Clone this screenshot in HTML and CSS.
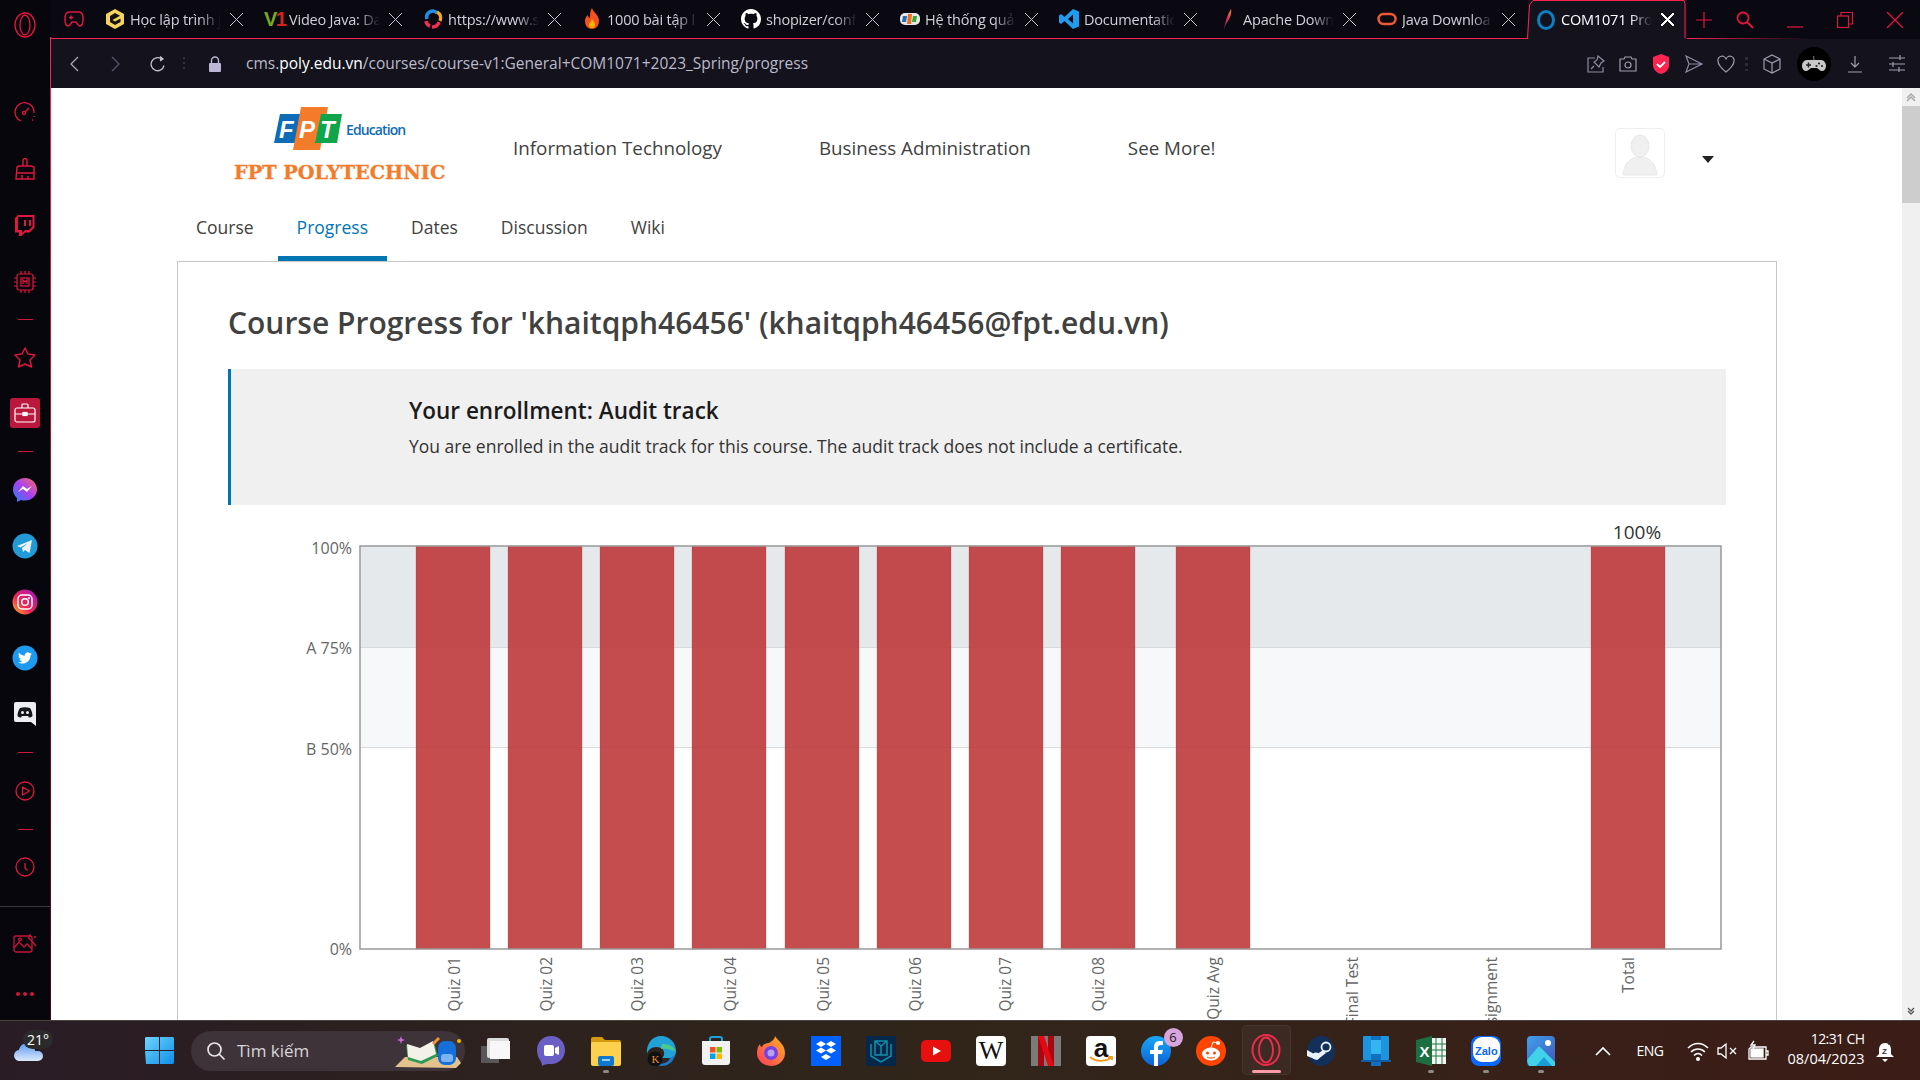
FILE: index.html
```html
<!DOCTYPE html>
<html lang="en">
  <head>
    <meta charset="UTF-8" />
    <meta name="viewport" content="width=device-width, initial-scale=1.0" />
    <title>COM1071 Progress</title>
    <link rel="stylesheet" href="styles.css">
  </head>
  <body>
    <div class="browser">
      <!-- opera side bar -->
      <aside class="sidebar">
        <div class="side-logo">
          <svg width="22" height="26" viewBox="0 0 22 26" fill="none" stroke="#e0173f" stroke-width="1.3"><ellipse cx="11" cy="13" rx="10" ry="12"/><ellipse cx="11" cy="13" rx="5" ry="10"/></svg>
        </div>
        <div class="side-slot first">
          <svg width="22" height="22" viewBox="0 0 22 22" fill="none" stroke="#e0173f" stroke-width="1.3"><path d="M7 20A9.5 9.5 0 1 1 20 12"/><circle cx="10" cy="12" r="1.5"/><path d="M11 11l4-4M20 15v1M18 19h1"/></svg>
        </div>
        <div class="side-slot nudge">
          <svg width="20" height="22" viewBox="0 0 20 22" fill="none" stroke="#e0173f" stroke-width="1.4"><path d="M8 8V2.5a2 2 0 0 1 4 0V8M4 8h12l3 1v12H1l1-12zM1 15h18M7 21v-4M13 21v-3"/></svg>
        </div>
        <div class="side-slot nudge">
          <svg width="20" height="22" viewBox="0 0 20 22" fill="#e0173f"><path d="M3 0h16.500v12.500l-5 5H10l-3.500 3.500H4v-3.500H0V3zM3 2v13h4v3l3-3h4l3.500-3.500V2zM9 5h2v6H9zM14 5h2v6h-2z"/></svg>
        </div>
        <div class="side-slot">
          <svg width="24" height="24" viewBox="0 0 24 24" fill="none" stroke="#e0173f" stroke-width="1.200"><rect x="4" y="4" width="16" height="16" rx="2"/><rect x="8" y="8" width="8" height="8"/><path d="M8 1v3M12 1v3M16 1v3M8 20v3M12 20v3M16 20v3M1 8h3M1 12h3M1 16h3M20 8h3M20 12h3M20 16h3M10 14v-4l2 2 2-2v4"/></svg>
        </div>
        <div class="side-divider short"></div>
        <div class="side-slot">
          <svg width="22" height="21" viewBox="0 0 22 21" fill="none" stroke="#e0173f" stroke-width="1.4" stroke-linejoin="round"><path d="M11 1l3 6 7 1-5 5 1.500 7-6.500-3-6.500 3L6 13 1 8l7-1z"/></svg>
        </div>
        <div class="side-slot">
          <div class="side-active">
            <svg width="22" height="20" viewBox="0 0 22 20" fill="none" stroke="#fff" stroke-width="1.200"><rect x="1" y="5" width="20" height="14" rx="2"/><path d="M8 5V2a1 1 0 0 1 1-1h4a1 1 0 0 1 1 1v3M1 11h8M13 11h8"/><rect x="9" y="9.500" width="4" height="3" fill="#fff"/></svg>
          </div>
        </div>
        <div class="side-divider tall"></div>
        <div class="side-slot">
          <svg width="26" height="26" viewBox="0 0 26 26"><defs><linearGradient id="msgr" x1="0" y1="1" x2="1" y2="0"><stop offset="0" stop-color="#1e88f5"/><stop offset=".5" stop-color="#a83ff0"/><stop offset="1" stop-color="#ff6a6a"/></linearGradient></defs><path d="M13 1C6 1 1 6 1 12.500c0 3.500 1.500 6.500 4 8.500v4l4-2c1.300.4 2.600.5 4 .5 7 0 12-5 12-11S20 1 13 1z" fill="url(#msgr)"/><path d="M6 15l5-6 4 3 5-3-5 6-4-3z" fill="#fff"/></svg>
        </div>
        <div class="side-slot">
          <svg width="26" height="26" viewBox="0 0 26 26"><circle cx="13" cy="13" r="12.500" fill="#229ad6"/><path d="M5 13l15-6-2.500 13-4.500-3-2 2-1-4 6-5-7.500 4.500z" fill="#e8f4fb"/></svg>
        </div>
        <div class="side-slot">
          <svg width="26" height="26" viewBox="0 0 26 26" fill="none"><defs><linearGradient id="insta" x1="0" y1="1" x2="1" y2="0"><stop offset="0" stop-color="#fdc830"/><stop offset=".4" stop-color="#f2264f"/><stop offset="1" stop-color="#9b16c9"/></linearGradient></defs><circle cx="13" cy="13" r="12.500" fill="url(#insta)"/><rect x="6" y="6" width="14" height="14" rx="4" stroke="#fff" stroke-width="1.500"/><circle cx="13" cy="13" r="3.300" stroke="#fff" stroke-width="1.500"/><circle cx="17" cy="9" r="1" fill="#fff"/></svg>
        </div>
        <div class="side-slot">
          <svg width="26" height="26" viewBox="0 0 26 26"><circle cx="13" cy="13" r="12.500" fill="#1d9bf0"/><g transform="translate(6 6) scale(.58)"><path fill="#fff" d="M23.953 4.570a10 10 0 01-2.825.775 4.958 4.958 0 002.163-2.723c-.951.555-2.005.959-3.127 1.184a4.920 4.920 0 00-8.384 4.482C7.690 8.095 4.067 6.130 1.640 3.162a4.822 4.822 0 00-.666 2.475c0 1.710.870 3.213 2.188 4.096a4.904 4.904 0 01-2.228-.616v.060a4.923 4.923 0 003.946 4.827 4.996 4.996 0 01-2.212.085 4.936 4.936 0 004.604 3.417 9.867 9.867 0 01-6.102 2.105c-.390 0-.779-.023-1.170-.067a13.995 13.995 0 007.557 2.209c9.053 0 13.998-7.496 13.998-13.985 0-.210 0-.420-.015-.630A9.935 9.935 0 0024 4.590z"/></g></svg>
        </div>
        <div class="side-slot">
          <svg width="24" height="26" viewBox="0 0 24 26"><path d="M3 1h18a2 2 0 0 1 2 2v22l-5-4H3a2 2 0 0 1-2-2V3a2 2 0 0 1 2-2z" fill="#eceef1"/><path d="M7 7c3-1 7-1 10 0 1.500 2 2.500 5 2.500 8-1 1-2.500 1.500-3.500 1.500l-1-1.500H9l-1 1.500c-1 0-2.500-.5-3.500-1.500C4.500 12 5.500 9 7 7z" fill="#15151c"/><circle cx="9.500" cy="11.500" r="1.500" fill="#eceef1"/><circle cx="14.500" cy="11.500" r="1.500" fill="#eceef1"/></svg>
        </div>
        <div class="side-divider tall"></div>
        <div class="side-slot">
          <svg width="20" height="20" viewBox="0 0 20 20" fill="none" stroke="#e0173f" stroke-width="1.300"><circle cx="10" cy="10" r="9"/><path d="M7.500 6l7 4-7 4z" stroke-linejoin="round"/></svg>
        </div>
        <div class="side-divider"></div>
        <div class="side-slot">
          <svg width="20" height="20" viewBox="0 0 20 20" fill="none" stroke="#e0173f" stroke-width="1.300"><circle cx="10" cy="10" r="9"/><path d="M10 6v5l2.500 2.500"/></svg>
        </div>
        <div class="side-rule"></div>
        <div class="side-slot gallery">
          <svg width="24" height="20" viewBox="0 0 24 20" fill="none" stroke="#c8163a" stroke-width="1.300"><rect x="1" y="3" width="18" height="16" rx="2"/><path d="M1 15l5-6 5 5 3-3 5 5"/><circle cx="7" cy="6.500" r="1.300"/><path d="M15 4l8 9M17 1v3M21 4h2"/></svg>
        </div>
        <div class="side-dots"><span></span><span></span><span></span></div>
      </aside>

      <!-- tabs -->
      <header class="tabstrip">
        <div class="tab-game">
          <svg width="20" height="16" viewBox="0 0 20 16" fill="none" stroke="#e0173f" stroke-width="1.500"><path d="M5 1h10c3 0 4 3 4 7 0 3-.5 7-3 7-2 0-3-3-4-4H8c-1 1-2 4-4 4-2.500 0-3-4-3-7 0-4 1-7 4-7z"/><path d="M5 6.500h4M7 4.500v4M13 5h.1M15 7.500h.1"/></svg>
        </div>
        <div class="tabs">
          <div class="tab">
            <svg class="tab-icon" width="20" height="20" viewBox="0 0 20 20"><path d="M10 0l9 5v10l-9 5-9-5V5z" fill="#f4d35e"/><path d="M10 4l5 2.800-7.500 4.200 2.500 1.500 5.500-3V13l-5.500 3L5 13V7z" fill="#15130c"/></svg>
            <span class="tab-title">Học lập trình j</span><span class="tab-close"></span>
          </div>
          <div class="tab">
            <span class="tab-icon v1"><b class="v1-v">V</b><b class="v1-1">1</b></span>
            <span class="tab-title">Video Java: Da</span><span class="tab-close"></span>
          </div>
          <div class="tab">
            <svg class="tab-icon" width="20" height="20" viewBox="0 0 20 20" fill="none" stroke-width="3.500"><path d="M4 10a6 6 0 0 1 10-6" stroke="#1f8fe8"/><path d="M14 3a7 7 0 0 1 3 9" stroke="#f5a623"/><path d="M16 13a7 7 0 0 1-7 5" stroke="#f0304f"/><path d="M7 17a6 6 0 0 1-4-5" stroke="#f0304f"/></svg>
            <span class="tab-title">https://www.s</span><span class="tab-close"></span>
          </div>
          <div class="tab">
            <svg class="tab-icon" width="20" height="22" viewBox="0 0 20 22"><path d="M10 0c1 4 7 7 7 13 0 5-3 8-7 8s-7-3-7-8c0-3 1.500-5 3-6 0 2 1 3 2 3 0-4 0-7 2-10z" fill="#f4511e"/><path d="M10 11c1 2 3 3 3 6a3 3 0 0 1-6 0c0-2 2-3 3-6z" fill="#ffb300"/></svg>
            <span class="tab-title">1000 bài tập l</span><span class="tab-close"></span>
          </div>
          <div class="tab">
            <svg class="tab-icon" width="20" height="20" viewBox="0 0 16 16"><path fill="#fff" d="M8 0C3.580 0 0 3.580 0 8c0 3.540 2.290 6.530 5.470 7.590.400.070.550-.170.550-.380 0-.190-.010-.820-.010-1.490-2.010.370-2.530-.490-2.690-.940-.090-.230-.480-.940-.820-1.130-.280-.150-.680-.520-.010-.530.630-.010 1.080.580 1.230.820.720 1.210 1.870.870 2.330.660.070-.520.280-.870.510-1.070-1.780-.200-3.640-.890-3.640-3.950 0-.870.310-1.590.820-2.150-.080-.200-.360-1.020.080-2.120 0 0 .670-.210 2.200.820.640-.180 1.320-.270 2-.270.680 0 1.360.090 2 .270 1.530-1.040 2.200-.820 2.200-.820.440 1.100.160 1.920.080 2.120.510.560.820 1.270.820 2.150 0 3.070-1.870 3.750-3.650 3.950.290.250.540.730.540 1.480 0 1.070-.010 1.930-.010 2.200 0 .210.150.460.550.380A8.013 8.013 0 0016 8c0-4.420-3.580-8-8-8z"/></svg>
            <span class="tab-title">shopizer/conf</span><span class="tab-close"></span>
          </div>
          <div class="tab">
            <svg class="tab-icon" width="20" height="14" viewBox="0 0 20 14"><rect y="1" width="20" height="12" rx="5" fill="#e8e8e8"/><path d="M3 4h4l-1 6H2z" fill="#1b6fbd"/><path d="M8 2h4l-1 10H7z" fill="#f26f21"/><path d="M13 4h4l-1 6h-4z" fill="#3aaa35"/></svg>
            <span class="tab-title">Hệ thống quả</span><span class="tab-close"></span>
          </div>
          <div class="tab">
            <svg class="tab-icon" width="20" height="20" viewBox="0 0 20 20"><path d="M14 0l6 2.500v15L14 20 5.500 12 2 15l-2-1.500V6.500L2 5l3.500 3zM14 5.500L9 10l5 4.500z" fill="#1f9cf0"/></svg>
            <span class="tab-title">Documentatio</span><span class="tab-close"></span>
          </div>
          <div class="tab">
            <svg class="tab-icon" width="20" height="22" viewBox="0 0 20 22"><defs><linearGradient id="feather" x1="0" y1="1" x2="1" y2="0"><stop offset="0" stop-color="#5b2a86"/><stop offset=".5" stop-color="#d32f4f"/><stop offset="1" stop-color="#f28c28"/></linearGradient></defs><path d="M6 21c1-7 3-14 7-20 1 4-1 10-5 15z" fill="url(#feather)"/></svg>
            <span class="tab-title">Apache Down</span><span class="tab-close"></span>
          </div>
          <div class="tab">
            <svg class="tab-icon" width="20" height="14" viewBox="0 0 20 14"><rect x="1.500" y="2" width="17" height="10" rx="5" fill="none" stroke="#ee5a35" stroke-width="2.500"/></svg>
            <span class="tab-title">Java Downloa</span><span class="tab-close"></span>
          </div>
          <div class="tab active">
            <svg class="tab-frame" width="159" height="39" viewBox="0 0 159 39" fill="none" stroke="#ff2350"><path d="M0 38.500h.5l2-33.500L6 .5h151l1 3V38.500"/></svg>
            <svg class="tab-icon" width="20" height="20" viewBox="0 0 20 20"><ellipse cx="10" cy="10" rx="7.500" ry="8.500" fill="none" stroke="#0d7fc0" stroke-width="3"/></svg>
            <span class="tab-title">COM1071 Pro</span><span class="tab-close"></span>
          </div>
        </div>
        <div class="win-btn plus"><svg width="16" height="16" viewBox="0 0 16 16" stroke="#e0173f" stroke-width="1.200"><path d="M8 0v16M0 8h16"/></svg></div>
        <div class="win-btn find"><svg width="18" height="18" viewBox="0 0 18 18" fill="none" stroke="#e0173f" stroke-width="1.800"><circle cx="7" cy="7" r="5.500"/><path d="M11 11l6 6"/></svg></div>
        <div class="win-btn min"><svg width="16" height="16" viewBox="0 0 16 16" stroke="#e0173f" stroke-width="1.200"><path d="M0 15h16"/></svg></div>
        <div class="win-btn restore"><svg width="16" height="16" viewBox="0 0 16 16" fill="none" stroke="#e0173f" stroke-width="1.200"><rect x=".5" y="4" width="11" height="11.500"/><path d="M4 4V.5h11.500V12H12"/></svg></div>
        <div class="win-btn shut"><svg width="16" height="16" viewBox="0 0 16 16" stroke="#e0173f" stroke-width="1.300"><path d="M0 0l16 16M16 0L0 16"/></svg></div>
      </header>

      <!-- address bar -->
      <div class="addressbar">
        <svg class="addr-back" width="16" height="16" viewBox="0 0 16 16" fill="none" stroke="#a9a6b8" stroke-width="1.300"><path d="M11 1L4 8l7 7"/></svg>
        <svg class="addr-forward" width="16" height="16" viewBox="0 0 16 16" fill="none" stroke="#55536a" stroke-width="1.300"><path d="M5 1l7 7-7 7"/></svg>
        <svg class="addr-reload" width="16" height="16" viewBox="0 0 16 16" fill="none" stroke="#c2c0cc" stroke-width="1.300"><path d="M14 9.500A6.500 6.500 0 1 1 11.500 3"/><path d="M10 .5l3 2.500-3 2" fill="#c2c0cc"/></svg>
        <span class="addr-dots"></span>
        <svg class="addr-lock" width="14" height="16" viewBox="0 0 14 16"><rect x="1" y="7" width="12" height="9" rx="1" fill="#bdb6d6"/><path d="M3.500 7V4.500a3.500 3.500 0 0 1 7 0V7" fill="none" stroke="#bdb6d6" stroke-width="1.400"/></svg>
        <div class="url">cms.<b>poly.edu.vn</b>/courses/course-v1:General+COM1071+2023_Spring/progress</div>
        <div class="addr-tools">
          <svg class="tool" width="20" height="20" viewBox="0 0 20 20" fill="none" stroke="#8f8ca0" stroke-width="1.200"><path d="M9 4H2v14h15v-5"/><path d="M12 2l6 5-3 2-2 4-5-5 3-2zM8 12l-3 3"/></svg>
          <svg class="tool t2" width="20" height="20" viewBox="0 0 20 20" fill="none" stroke="#a09dae" stroke-width="1.200"><path d="M2 5h4l1-2h6l1 2h4v12H2z"/><circle cx="10" cy="11" r="3"/></svg>
          <svg class="tool t3" width="20" height="20" viewBox="0 0 20 20"><path d="M10 0l8 3v8c0 5-4 8-8 9-4-1-8-4-8-9V3z" fill="#ff2350"/><path d="M6 10l3 3 5-5" fill="none" stroke="#fff" stroke-width="1.800"/></svg>
          <svg class="tool t3" width="20" height="20" viewBox="0 0 20 20" fill="none" stroke="#8f8ca0" stroke-width="1.200"><path d="M2 2l16 8-16 8 3-8zM5 10h13"/></svg>
          <svg class="tool t2" width="20" height="20" viewBox="0 0 20 20" fill="none" stroke="#a09dae" stroke-width="1.200"><path d="M10 18C5 14 2 11 2 7a4 4 0 0 1 8-1.500A4 4 0 0 1 18 7c0 4-3 7-8 11z"/></svg>
          <span class="tool-dots"></span>
          <svg class="tool t4" width="20" height="20" viewBox="0 0 20 20" fill="none" stroke="#a09dae" stroke-width="1.200"><path d="M10 1l8 4v10l-8 4-8-4V5zM2 5l8 4 8-4M10 9v10"/></svg>
          <div class="tool-game">
            <svg width="26" height="18" viewBox="0 0 26 18"><path d="M6 5h14c3 0 5 3 5 6s-2 5-4 5-3-2-5-3h-6c-2 1-3 3-5 3s-4-2-4-5 2-6 5-6z" fill="#c9c9c9"/><path d="M5 10h5M7.500 7.500v5" stroke="#222" stroke-width="1.500"/><circle cx="18" cy="8.500" r="1.100" fill="#222"/><circle cx="21" cy="11" r="1.100" fill="#222"/><circle cx="15.500" cy="11" r="1.100" fill="#222"/><path d="M13 5c0-2-1-2 0-4" fill="none" stroke="#888"/></svg>
          </div>
          <svg class="tool t5" width="20" height="20" viewBox="0 0 20 20" fill="none" stroke="#a09dae" stroke-width="1.200"><path d="M10 2v11M6 9l4 4 4-4M3 18h14"/></svg>
          <svg class="tool t6" width="20" height="20" viewBox="0 0 20 20" fill="none" stroke="#a09dae" stroke-width="1.200"><path d="M2 4h16M2 10h16M2 16h16M13 1v5M6 8v5M12 13v5"/></svg>
        </div>
      </div>

      <!-- page -->
      <div class="viewport">
        <main class="page">
          <div class="site-head">
            <div class="logo">
              <div class="logo-top">
                <svg width="68" height="44" viewBox="0 0 68 44" class="logo-mark">
                  <path d="M6 7h26l-6 29H0z" fill="#0d6cb5"/>
                  <path d="M27 0h27l-8 43H19z" fill="#f47b2a"/>
                  <path d="M47 7h21l-5 29H41z" fill="#10a54a"/>
                  <text x="5" y="31" class="fpt-letter">F</text>
                  <text x="25" y="31" class="fpt-letter">P</text>
                  <text x="46" y="31" class="fpt-letter">T</text>
                </svg>
                <span class="logo-edu">Education</span>
              </div>
              <div class="logo-name">FPT POLYTECHNIC</div>
            </div>
            <nav class="main-nav">
              <a>Information Technology</a>
              <a>Business Administration</a>
              <a>See More!</a>
            </nav>
            <div class="avatar">
              <svg width="48" height="48" viewBox="0 0 48 48" fill="#f0f0f0" stroke="#e8e8e8"><ellipse cx="24" cy="17" rx="9" ry="11"/><path d="M7 46c1-12 8-18 17-18s16 6 17 18z"/></svg>
            </div>
            <span class="caret"></span>
          </div>

          <nav class="course-nav">
            <a>Course</a>
            <a class="current">Progress</a>
            <a>Dates</a>
            <a>Discussion</a>
            <a>Wiki</a>
          </nav>

          <section class="card">
            <h1 class="progress-title">Course Progress for 'khaitqph46456' (khaitqph46456@fpt.edu.vn)</h1>
            <div class="enrollment">
              <h2>Your enrollment: Audit track</h2>
              <p>You are enrolled in the audit track for this course. The audit track does not include a certificate.</p>
            </div>
            <svg class="chart" width="1498" height="520" viewBox="0 0 1498 520">
              <rect x="132" y="26" width="1361" height="102" fill="#e6e9ec"/>
              <rect x="132" y="128" width="1361" height="100" fill="#f7f8fa"/>
              <path d="M132 127.500h1361M132 227.500h1361" stroke="#d8dbde"/>
              <g class="bars">
                <rect x="188" y="26" width="74" height="403"/>
                <rect x="280" y="26" width="74" height="403"/>
                <rect x="372" y="26" width="74" height="403"/>
                <rect x="464" y="26" width="74" height="403"/>
                <rect x="557" y="26" width="74" height="403"/>
                <rect x="649" y="26" width="74" height="403"/>
                <rect x="741" y="26" width="74" height="403"/>
                <rect x="833" y="26" width="74" height="403"/>
                <rect x="948" y="26" width="74" height="403"/>
                <rect x="1363" y="26" width="74" height="403"/>
              </g>
              <rect x="132" y="26" width="1361" height="403" fill="none" stroke="#999" stroke-width="1.500"/>
              <g class="y-labels">
                <text x="124" y="34">100%</text>
                <text x="124" y="134">A 75%</text>
                <text x="124" y="235">B 50%</text>
                <text x="124" y="435">0%</text>
              </g>
              <text x="1409" y="19" class="bar-value">100%</text>
              <g class="x-labels">
                <text transform="translate(232 437) rotate(-90)">Quiz 01</text>
                <text transform="translate(324 437) rotate(-90)">Quiz 02</text>
                <text transform="translate(415 437) rotate(-90)">Quiz 03</text>
                <text transform="translate(508 437) rotate(-90)">Quiz 04</text>
                <text transform="translate(601 437) rotate(-90)">Quiz 05</text>
                <text transform="translate(693 437) rotate(-90)">Quiz 06</text>
                <text transform="translate(783 437) rotate(-90)">Quiz 07</text>
                <text transform="translate(876 437) rotate(-90)">Quiz 08</text>
                <text transform="translate(991 437) rotate(-90)">Quiz Avg</text>
                <text transform="translate(1130 437) rotate(-90)">Final Test</text>
                <text transform="translate(1269 437) rotate(-90)">Assignment</text>
                <text transform="translate(1406 437) rotate(-90)">Total</text>
              </g>
            </svg>
          </section>
        </main>
        <div class="scrollbar">
          <svg width="18" height="18" viewBox="0 0 18 18" fill="none" stroke="#a8a8a8" stroke-width="1.500"><path d="M5 10l4-4 4 4M5 13l4-4 4 4"/></svg>
          <div class="scroll-thumb"></div>
          <svg class="scroll-down" width="18" height="18" viewBox="0 0 18 18" fill="none" stroke="#555" stroke-width="1.300"><path d="M6 6l3 3 3-3M6 9l3 3 3-3"/></svg>
        </div>
      </div>
    </div>

    <!-- windows task bar -->
    <footer class="taskbar">
      <div class="weather">
        <svg width="32" height="22" viewBox="0 0 32 22"><defs><linearGradient id="cloud" x1="0" y1="0" x2="0" y2="1"><stop offset="0" stop-color="#5b9bf0"/><stop offset="1" stop-color="#dce8fa"/></linearGradient></defs><path d="M7 21a5.500 5.500 0 0 1-1-11c1-5 6-8 11-6 3 1 5 4 5 7h3a5 5 0 0 1 0 10z" fill="url(#cloud)"/></svg>
        <span class="temp">21°</span>
      </div>
      <svg class="start" width="30" height="30" viewBox="0 0 30 30"><defs><linearGradient id="win" x1="0" y1="0" x2="1" y2="1"><stop offset="0" stop-color="#6fd4fb"/><stop offset="1" stop-color="#0f8ee8"/></linearGradient></defs><path d="M1 1h13.500v13.500H0V2zM15.500 1H29l1 1v12.500H15.500zM0 15.500h14.500V29H1zM15.500 15.500H30V28l-1 1H15.500z" fill="url(#win)"/></svg>
      <div class="search">
        <svg width="20" height="20" viewBox="0 0 20 20" fill="none" stroke="#e8e6e8" stroke-width="1.700"><circle cx="8.500" cy="8.500" r="6.500"/><path d="M13 13l5.500 5.500"/></svg>
        <span>Tìm kiếm</span>
        <svg class="search-art" width="66" height="34" viewBox="0 0 66 34"><path d="M0 32l10-10h52l4 6-5 5z" fill="#e3c28f"/><path d="M11 10l14 4 14-7 4 14-16 8-14-4z" fill="#2f9a58"/><path d="M12 9l13 4 13-7 3 13-15 7-13-4z" fill="#f4f1e8"/><path d="M37 8l6-6 2 2-6 6z" fill="#f2963a"/><path d="M6 1l1 3 3 1-3 1-1 3-1-3-3-1 3-1z" fill="#d466e6"/><rect x="43" y="6" width="18" height="24" rx="7" fill="#1670dc"/><rect x="46" y="19" width="12" height="8" rx="3" fill="#7cb4f2"/><circle cx="64" cy="6" r="2" fill="#f5b400"/></svg>
      </div>
      <div class="apps">
        <div class="app"><svg width="30" height="26" viewBox="0 0 30 26"><rect x="0" y="8" width="18" height="17" fill="#58585a"/><rect x="6" y="0" width="22" height="20" rx="2" fill="#dcdcdc"/><rect x="9" y="3" width="20" height="18" fill="#f7f7f7"/></svg></div>
        <div class="app"><svg width="28" height="30" viewBox="0 0 28 30"><path d="M14 0c8 0 14 6 14 14s-6 14-14 14c-3 0-6 0-9 2 0-3-1-4-2-6C1 21 0 18 0 14 0 6 6 0 14 0z" fill="#6a5fc4"/><rect x="7" y="9" width="10" height="11" rx="2" fill="#fff"/><path d="M18 12l4-2v9l-4-2z" fill="#fff"/></svg></div>
        <div class="app dot"><svg width="30" height="30" viewBox="0 0 30 30"><path d="M0 3a2 2 0 0 1 2-2h9l3 3h14a2 2 0 0 1 2 2v4H0z" fill="#d79a0c"/><rect y="6" width="30" height="24" rx="2" fill="#fdd14e"/><rect x="7" y="20" width="16" height="10" rx="2" fill="#0f78cc"/><rect x="11" y="23" width="8" height="2" fill="#9bd0f5"/></svg></div>
        <div class="app"><svg width="30" height="30" viewBox="0 0 30 30"><path d="M15 0c9 0 15 7 15 15 0 5-3 7-6 7h-8c3-2 3-8-1-10C8 9 2 13 1 18 0 8 6 0 15 0z" fill="#22a0d8"/><path d="M30 14c0 9-6 16-14 16-3 0-5-1-7-2 5 0 13 0 15-6 3-1 6-3 6-8z" fill="#1b78c8"/><path d="M16 8c6 0 12 2 14 8-2-1-8-4-15-3z" fill="#4ec98a"/><circle cx="9" cy="23" r="7.500" fill="#111"/><text x="5.500" y="27" class="edge-k">K</text></svg></div>
        <div class="app"><svg width="30" height="30" viewBox="0 0 30 30" fill="none"><path d="M9 6V3a2 2 0 0 1 2-2h8a2 2 0 0 1 2 2v3" stroke="#1ba2e0" stroke-width="2"/><path d="M1 5h28v21a3 3 0 0 1-3 3H4a3 3 0 0 1-3-3z" fill="#f1f1f1"/><rect x="9" y="11" width="5.500" height="5.500" fill="#f25022"/><rect x="15.500" y="11" width="5.500" height="5.500" fill="#7fba00"/><rect x="9" y="17.500" width="5.500" height="5.500" fill="#00a4ef"/><rect x="15.500" y="17.500" width="5.500" height="5.500" fill="#ffb900"/></svg></div>
        <div class="app"><svg width="28" height="30" viewBox="0 0 28 30"><defs><linearGradient id="fox" x1="0" y1="1" x2="1" y2="0"><stop offset="0" stop-color="#ff3c5c"/><stop offset="1" stop-color="#ffb020"/></linearGradient></defs><path d="M18 0c2 4 10 8 10 17a14 13 0 0 1-28 0c0-4 1-7 3-9 0 2 1 3 2 3 1-3 4-4 7-4 3-2 6-4 6-7z" fill="url(#fox)"/><circle cx="14" cy="17" r="7" fill="#7542e5"/><circle cx="14" cy="17" r="3.500" fill="#b8a0f2"/></svg></div>
        <div class="app"><svg width="30" height="30" viewBox="0 0 30 30"><rect width="30" height="30" fill="#0061fe"/><path d="M10 5l5 3-5 3-5-3zM20 5l5 3-5 3-5-3zM10 11.500l5 3-5 3-5-3zM20 11.500l5 3-5 3-5-3zM15 18l5 3-5 3-5-3z" fill="#fff"/></svg></div>
        <div class="app"><svg width="30" height="30" viewBox="0 0 30 30" fill="none"><rect width="30" height="30" fill="#04274a"/><path d="M9 5h12v14l-6 0-6 0zM9 5l6 5 6-5M15 10v9M5 8v12l10 6 10-6V8" stroke="#0f90a8" stroke-width="1.500"/></svg></div>
        <div class="app"><svg width="30" height="22" viewBox="0 0 30 22"><rect width="30" height="22" rx="5" fill="#e80f0f"/><path d="M12 6.500l8 4.500-8 4.500z" fill="#fff"/></svg></div>
        <div class="app"><div class="wiki">W</div></div>
        <div class="app"><svg width="30" height="30" viewBox="0 0 30 30"><rect width="30" height="30" fill="#7b7b7b"/><rect x="7" width="6" height="30" fill="#a90812"/><rect x="17" width="6" height="30" fill="#a90812"/><path d="M7 0h6l10 30h-6z" fill="#e50914"/></svg></div>
        <div class="app"><div class="amazon">a<svg width="24" height="8" viewBox="0 0 24 8" fill="none" stroke="#f59a1e" stroke-width="1.800"><path d="M1 1c6 5 15 5 21 1M19 1h4v3"/></svg></div></div>
        <div class="app fb"><svg width="30" height="30" viewBox="0 0 30 30"><defs><linearGradient id="fbg" x1="0" y1="1" x2="0" y2="0"><stop offset="0" stop-color="#0b62d6"/><stop offset="1" stop-color="#19a8f6"/></linearGradient></defs><circle cx="15" cy="15" r="15" fill="url(#fbg)"/><path d="M13 30V18H9v-4h4v-3c0-4 2-6 6-6h3v4h-2c-2 0-3 1-3 2.500V14h5l-1 4h-4v12z" fill="#fff"/></svg><span class="fb-badge">6</span></div>
        <div class="app"><svg width="30" height="30" viewBox="0 0 30 30"><circle cx="15" cy="15" r="15" fill="#ff4500"/><ellipse cx="15" cy="18" rx="9" ry="6.500" fill="#fff"/><circle cx="11.500" cy="17" r="1.500" fill="#ff4500"/><circle cx="18.500" cy="17" r="1.500" fill="#ff4500"/><circle cx="22" cy="7" r="2" fill="#fff"/><path d="M15 12l2-6 5 1" fill="none" stroke="#fff"/><path d="M11 21c2 1.500 6 1.500 8 0" fill="none" stroke="#ff4500"/></svg></div>
        <div class="app running"><svg width="30" height="32" viewBox="0 0 30 32" fill="none" stroke="#ee2a4d" stroke-width="2"><ellipse cx="15" cy="16" rx="13.500" ry="15"/><ellipse cx="15" cy="16" rx="7" ry="12.500"/></svg></div>
        <div class="app"><svg width="30" height="30" viewBox="0 0 30 30"><ellipse cx="15" cy="15" rx="14" ry="15" fill="#12305a"/><circle cx="20" cy="11" r="4.500" fill="none" stroke="#eaf2f8" stroke-width="1.800"/><circle cx="10" cy="20" r="3.500" fill="#eaf2f8"/><path d="M1 14l9 5 7-5 3 3-9 7-10-4z" fill="#eaf2f8"/></svg></div>
        <div class="app"><svg width="30" height="30" viewBox="0 0 30 30"><rect x="2" width="26" height="24" rx="1" fill="#1c94e0"/><rect x="10" width="10" height="30" fill="#1070c0"/><rect x="10" y="4" width="10" height="14" fill="#34b4f0"/><rect y="24" width="30" height="2" fill="#0e5fa8"/></svg></div>
        <div class="app dot"><svg width="30" height="30" viewBox="0 0 30 30"><rect x="10" y="2" width="20" height="26" fill="#f2f5f2"/><path d="M14 2v26M20 2v26M26 2v26M10 8h20M10 14h20M10 20h20" stroke="#1f7a45" stroke-width="1"/><path d="M0 4l16-4v30L0 26z" fill="#1d6f42"/><text x="3.500" y="21" class="excel-x">X</text></svg></div>
        <div class="app dot"><svg width="30" height="30" viewBox="0 0 30 30"><path d="M8 0h14c5 0 8 4 8 8v14c0 5-4 8-8 8H8C3 30 0 26 0 22V8c0-4 3-8 8-8z" fill="#0a68ff"/><rect x="2" y="1" width="27" height="25" rx="9" fill="#fff"/><text x="4" y="19" class="zalo">Zalo</text></svg></div>
        <div class="app dot"><svg width="28" height="30" viewBox="0 0 28 30"><defs><linearGradient id="pho" x1="0" y1="0" x2="1" y2="1"><stop offset="0" stop-color="#3ea0ef"/><stop offset="1" stop-color="#4257b8"/></linearGradient></defs><rect width="28" height="30" rx="4" fill="url(#pho)"/><circle cx="21" cy="7" r="3" fill="#fff"/><path d="M0 24l12-14 16 16v4H2z" fill="#3fd2e8"/><path d="M9 30l8-9 8 9z" fill="#1d9bd8"/></svg></div>
      </div>
      <div class="tray">
        <svg class="tray-chevron" width="16" height="10" viewBox="0 0 16 10" fill="none" stroke="#fff" stroke-width="1.700"><path d="M1 9l7-7 7 7"/></svg>
        <span class="lang">ENG</span>
        <svg class="tray-wifi" width="22" height="20" viewBox="0 0 22 20" fill="none" stroke="#fff" stroke-width="1.600"><path d="M1 7c6-6 14-6 20 0M4 11c4-4 10-4 14 0M7 14.500c2.500-2.500 5.500-2.500 8 0"/><circle cx="11" cy="18" r="1.200" fill="#fff"/></svg>
        <svg class="tray-speaker" width="20" height="18" viewBox="0 0 20 18" fill="none" stroke="#fff" stroke-width="1.300"><path d="M1 6h3l5-4v14l-5-4H1zM13 6l6 6M19 6l-6 6"/></svg>
        <svg class="tray-battery" width="22" height="22" viewBox="0 0 22 22" fill="none" stroke="#fff" stroke-width="1.300"><path d="M4 7h15v12H2V9z"/><rect x="4" y="9" width="12" height="8" fill="#fff"/><path d="M19 11h2v4h-2"/><path d="M7 1L4 5h4L6 9" /></svg>
        <div class="clock"><span class="clock-time">12:31 CH</span><span class="clock-date">08/04/2023</span></div>
        <svg class="tray-bell" width="20" height="24" viewBox="0 0 20 24"><path d="M10 4c4 0 6 3 6 7v4l3 3H1l3-3v-4c0-4 2-7 6-7zM7 20h6l-3 3z" fill="#fff"/><text x="7" y="15" class="bell-z">Z</text><text x="13" y="6" class="bell-z">z</text></svg>
      </div>
    </footer>
  </body>
</html>
```

FILE: styles.css
```css
* {
  box-sizing: border-box;
}

html,
body {
  margin: 0;
  padding: 0;
  width: 1920px;
  height: 1080px;
  overflow: hidden;
  font-family: "Open Sans", "Noto Sans", sans-serif;
}

svg {
  display: block;
  flex: none;
}

.browser {
  display: grid;
  grid-template-columns: 51px 1fr;
  grid-template-rows: 39px 49px 1fr;
  height: 1020px;
  background: #fff;
}

/* side bar */
.sidebar {
  grid-row: 1 / 4;
  display: flex;
  flex-direction: column;
  align-items: center;
  background: #07060c;
  border-right: 1px solid;
  border-image: linear-gradient(#07060c 38px, #ff2350 38px, #a60f30 45%, #4a0715) 1;
}

.side-logo {
  height: 50px;
  flex: none;
  display: flex;
  align-items: center;
  justify-content: center;
}

.side-slot {
  height: 56px;
  width: 100%;
  flex: none;
  display: flex;
  align-items: center;
  justify-content: center;
}

.side-slot.first {
  margin-top: 34px;
}

.side-slot.nudge {
  margin-top: 1px;
}

.side-divider {
  height: 20px;
  flex: none;
  width: 15px;
  display: flex;
  align-items: center;
}

.side-divider.tall {
  height: 21px;
}

.side-divider.short {
  height: 19px;
}

.side-divider::after {
  content: "";
  width: 100%;
  height: 1px;
  background: #d0163c;
}

.side-active {
  width: 30px;
  height: 30px;
  border-radius: 3px;
  background: #bb173c;
  display: flex;
  align-items: center;
  justify-content: center;
}

.side-rule {
  width: 50px;
  height: 1px;
  background: #3a3a40;
  flex: none;
  margin-top: 11px;
  margin-bottom: 8px;
}

.side-dots {
  display: flex;
  gap: 3px;
  margin-top: 21px;
}

.side-dots span {
  width: 4px;
  height: 4px;
  border-radius: 50%;
  background: #d0163c;
}

/* tab strip */
.tabstrip {
  display: flex;
  align-items: center;
  height: 39px;
  background: #0a0911 linear-gradient(to right, #ff2350 1636px, transparent 1760px) no-repeat bottom / 100% 1px;
}

.tab-game {
  width: 46px;
  display: flex;
  justify-content: center;
  margin-bottom: 1px;
}

.tabs {
  display: flex;
  height: 39px;
}

.tab {
  position: relative;
  width: 159px;
  height: 38px;
  display: flex;
  align-items: center;
  padding-left: 8px;
  color: #d2d0d6;
  font-size: 14.5px;
  white-space: nowrap;
}

.tab-icon {
  width: 20px;
  flex: none;
}

.v1 {
  font-family: "Liberation Sans", sans-serif;
  font-size: 20px;
  letter-spacing: -1.5px;
  display: flex;
}

.v1-v {
  color: #7aa81f;
}

.v1-1 {
  color: #d5231f;
}

.tab-title {
  width: 91px;
  margin-left: 5px;
  -webkit-mask-image: linear-gradient(to right, #000 76%, transparent 100%);
  mask-image: linear-gradient(to right, #000 76%, transparent 100%);
  letter-spacing: -0.2px;
}

.tab-close {
  position: relative;
  width: 13px;
  height: 13px;
  margin-left: 9px;
  background:
    linear-gradient(45deg, transparent 47%, #c8c6cc 47%, #c8c6cc 53%, transparent 53%),
    linear-gradient(-45deg, transparent 47%, #c8c6cc 47%, #c8c6cc 53%, transparent 53%);
}

.tab.active {
  height: 39px;
  background: #13121d;
  color: #fff;
}

.tab.active .tab-close {
  background:
    linear-gradient(45deg, transparent 46%, #fff 46%, #fff 54%, transparent 54%),
    linear-gradient(-45deg, transparent 46%, #fff 46%, #fff 54%, transparent 54%);
}

.tab-frame {
  position: absolute;
  left: -1px;
  top: 0;
}

.win-btn.plus {
  margin-left: 9px;
}

.win-btn.find {
  margin-left: 24px;
}

.win-btn.min {
  margin-left: 33px;
}

.win-btn.restore {
  margin-left: 34px;
}

.win-btn.shut {
  margin-left: 34px;
}

/* address bar */
.addressbar {
  display: flex;
  align-items: center;
  background: #13121d;
  color: #bcbac8;
  font-size: 15.5px;
}

.addr-back {
  margin-left: 16px;
}

.addr-forward {
  margin-left: 24px;
}

.addr-reload {
  margin-left: 27px;
}

.addr-dots {
  width: 2px;
  height: 14px;
  margin-left: 17px;
  background: repeating-linear-gradient(#33323f 0 2px, transparent 2px 5px);
}

.addr-lock {
  margin-left: 23px;
}

.url {
  margin: -2px 0 0 24px;
  white-space: nowrap;
}

.url b {
  font-weight: 400;
  color: #fff;
}

.addr-tools {
  margin-left: auto;
  padding-right: 13px;
  display: flex;
  align-items: center;
}

.tool.t2 {
  margin-left: 12px;
}

.tool.t3 {
  margin-left: 13px;
}

.tool.t4 {
  margin-left: 14px;
}

.tool.t5 {
  margin-left: 14px;
}

.tool.t6 {
  margin-left: 22px;
}

.tool-dots {
  width: 3px;
  height: 14px;
  margin-left: 9px;
  background: repeating-linear-gradient(#2c2b38 0 3px, transparent 3px 6px);
}

.tool-game {
  width: 34px;
  height: 34px;
  margin-left: 15px;
  border-radius: 50%;
  background: #000;
  display: flex;
  align-items: center;
  justify-content: center;
}

/* page */
.viewport {
  display: flex;
  overflow: hidden;
  height: 932px;
}

.page {
  flex: 1;
  overflow: hidden;
  padding-left: 126px;
  background: #fff;
}

.site-head {
  height: 120px;
  display: flex;
  position: relative;
}

.logo {
  margin-left: 57px;
  width: 213px;
  padding-top: 20px;
}

.logo-top {
  display: flex;
  align-items: center;
  margin-left: 40px;
  height: 42px;
}

.fpt-letter {
  font-family: "Liberation Sans", sans-serif;
  font-weight: 700;
  font-style: italic;
  font-size: 24px;
  fill: #fff;
}

.logo-edu {
  margin-left: 4px;
  color: #0d6cb5;
  font-size: 14px;
  font-weight: 600;
  letter-spacing: -0.9px;
  white-space: nowrap;
}

.logo-name {
  margin-top: 12px;
  font-family: "DejaVu Serif", serif;
  font-weight: 700;
  font-size: 19.3px;
  line-height: 22px;
  color: #f47b2a;
  -webkit-text-stroke: 0.3px #f47b2a;
  white-space: nowrap;
}

.main-nav {
  display: flex;
  gap: 97px;
  margin-left: 66px;
  padding-top: 46px;
  font-size: 18.8px;
  line-height: 28px;
  color: #414141;
  white-space: nowrap;
}

.avatar {
  position: absolute;
  left: 1438px;
  top: 40px;
  width: 50px;
  height: 50px;
  border: 1px solid #eee;
  border-radius: 5px;
  overflow: hidden;
}

.caret {
  position: absolute;
  left: 1525px;
  top: 68px;
  border-left: 6.5px solid transparent;
  border-right: 6.5px solid transparent;
  border-top: 7px solid #222;
}

.course-nav {
  height: 53px;
  display: flex;
  gap: 5px;
  font-size: 17.5px;
  line-height: 38px;
  color: #414141;
}

.course-nav a {
  padding: 0 19px;
  height: 53px;
}

.course-nav a.current {
  color: #0075b4;
  border-bottom: 5px solid #0075b4;
}

.card {
  width: 1600px;
  height: 800px;
  border: 1px solid #c8c8c8;
  padding: 41px 50px 0;
}

.progress-title {
  margin: 0 0 26px;
  font-size: 30px;
  line-height: 40px;
  font-weight: 600;
  color: #414141;
  white-space: nowrap;
}

.enrollment {
  height: 136px;
  border-left: 3px solid #0075b4;
  background: #f0f0f0;
  padding: 25px 0 0 178px;
}

.enrollment h2 {
  margin: 0;
  font-size: 22.5px;
  line-height: 34px;
  font-weight: 600;
  color: #1b1b1b;
}

.enrollment p {
  margin: 5px 0 0;
  font-size: 17.5px;
  line-height: 26px;
  color: #333;
}

.chart {
  margin-top: 15px;
}

.bars rect {
  fill: rgba(188, 50, 52, 0.87);
  stroke: rgba(188, 50, 52, 0.25);
}

.y-labels text {
  text-anchor: end;
  font-size: 16px;
  fill: #666;
}

.x-labels text {
  text-anchor: end;
  font-size: 15.5px;
  fill: #666;
}

.bar-value {
  text-anchor: middle;
  font-size: 19px;
  fill: #333;
}

.scrollbar {
  width: 18px;
  background: #f0f0f0;
  display: flex;
  flex-direction: column;
}

.scroll-thumb {
  height: 97px;
  background: #cdcdcd;
}

.scroll-down {
  margin-top: auto;
}

/* task bar */
.taskbar {
  height: 60px;
  display: flex;
  align-items: center;
  color: #fff;
  border-top: 1px solid #4a4340;
  background: linear-gradient(to right, #2a1c25, #30251a 45%, #33241a 60%, #3c1c16);
}

.weather {
  position: relative;
  width: 145px;
  height: 100%;
  padding: 19px 0 0 13px;
}

.temp {
  position: absolute;
  left: 23px;
  top: 9px;
  width: 30px;
  height: 19px;
  border-radius: 10px;
  background: #2b2b2b;
  font-size: 14px;
  line-height: 19px;
  text-align: center;
}

.start {
  width: 29px;
  height: 29px;
}

.search {
  display: flex;
  align-items: center;
  width: 274px;
  height: 40px;
  margin-left: 17px;
  padding-left: 15px;
  border-radius: 20px;
  background: #3e3339;
  color: #d8d5d8;
  font-size: 17px;
  position: relative;
}

.search span {
  margin-left: 11px;
}

.search-art {
  position: absolute;
  right: 4px;
  bottom: 2px;
}

.apps {
  display: flex;
  margin-left: 3.5px;
  height: 100%;
}

.app {
  position: relative;
  width: 55px;
  height: 100%;
  display: flex;
  align-items: center;
  justify-content: center;
}

.app.dot::after,
.app.running::after {
  content: "";
  position: absolute;
  bottom: 7px;
  left: 50%;
  width: 6px;
  height: 3px;
  margin-left: -3px;
  border-radius: 2px;
  background: #8d8a88;
}

.app.running {
  background: rgba(255, 255, 255, 0.04);
  border: 1px solid rgba(255, 255, 255, 0.05);
  border-radius: 5px;
  width: 49px;
  height: 50px;
  margin: 4px 3px 0;
}

.app.running::after {
  width: 29px;
  margin-left: -14.5px;
  background: #ff9aa8;
  bottom: 1px;
}

.wiki {
  width: 30px;
  height: 30px;
  border-radius: 4px;
  background: #fff;
  color: #111;
  font-family: "Liberation Serif", serif;
  font-size: 26px;
  line-height: 30px;
  text-align: center;
}

.amazon {
  position: relative;
  width: 30px;
  height: 30px;
  border-radius: 4px;
  background: #fff;
  color: #111;
  font-family: "Liberation Sans", sans-serif;
  font-weight: 700;
  font-size: 26px;
  line-height: 24px;
  text-align: center;
}

.amazon svg {
  position: absolute;
  left: 3px;
  bottom: 2px;
}

.fb-badge {
  position: absolute;
  left: 35px;
  top: 7px;
  width: 19px;
  height: 19px;
  border-radius: 50%;
  background: #d8a4dd;
  color: #222;
  font-size: 13px;
  line-height: 19px;
  text-align: center;
}

.edge-k {
  font-family: "Liberation Serif", serif;
  font-size: 11px;
  fill: #f08a30;
}

.excel-x {
  font-family: "Liberation Sans", sans-serif;
  font-weight: 700;
  font-size: 15px;
  fill: #fff;
}

.zalo {
  font-family: "Liberation Sans", sans-serif;
  font-weight: 700;
  font-size: 11px;
  fill: #0a68ff;
}

.bell-z {
  font-family: "Liberation Sans", sans-serif;
  font-weight: 700;
  font-size: 8px;
  fill: #333;
}

.tray {
  display: flex;
  align-items: center;
  font-size: 14px;
}

.tray-chevron {
  margin-left: 26px;
}

.lang {
  margin-left: 26px;
  width: 28px;
  letter-spacing: -0.5px;
}

.tray-wifi {
  margin-left: 22px;
}

.tray-speaker {
  margin-left: 8px;
}

.tray-battery {
  margin-left: 10px;
}

.clock {
  width: 80px;
  margin: -4px 0 0 16px;
  display: flex;
  flex-direction: column;
  align-items: flex-end;
  line-height: 20px;
  white-space: nowrap;
}

.clock-time {
  letter-spacing: -0.6px;
}

.clock-date {
  font-size: 14.5px;
}

.tray-bell {
  margin-left: 10px;
}
```
